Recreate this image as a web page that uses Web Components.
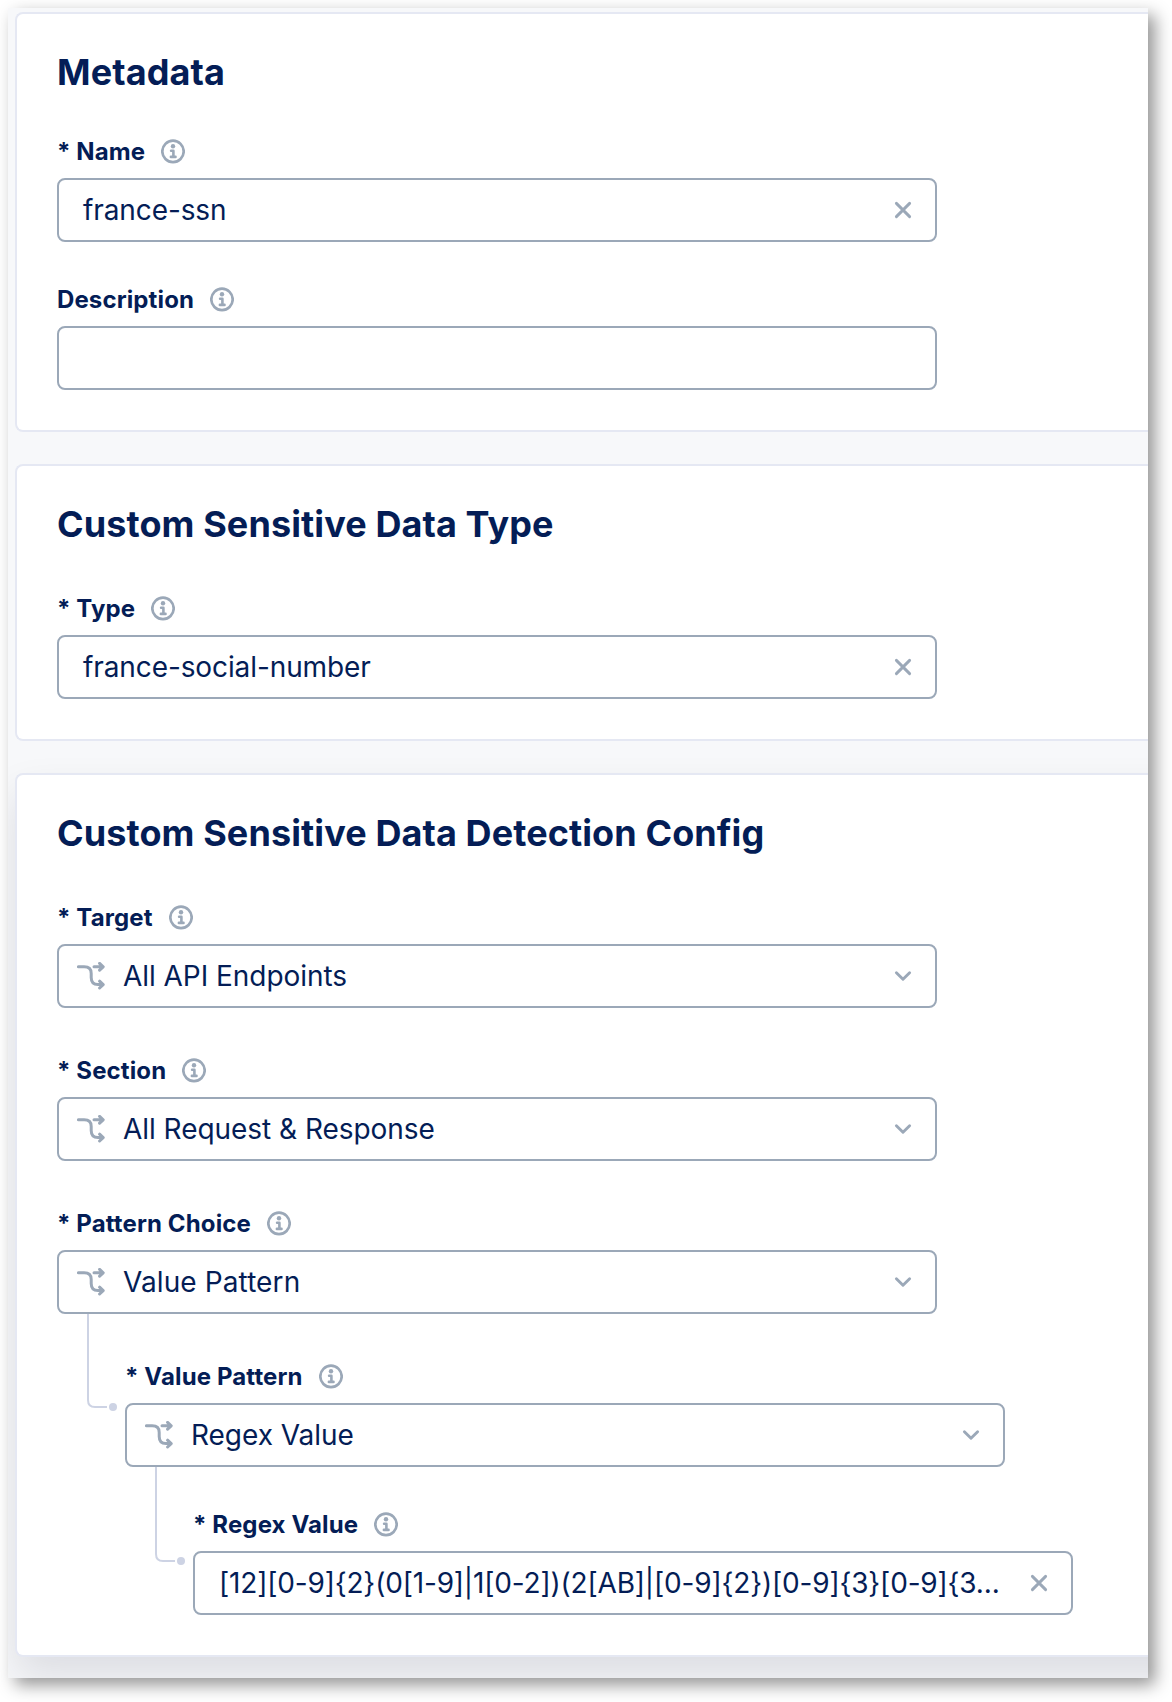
<!DOCTYPE html>
<html lang="en">
<head>
<meta charset="utf-8">
<title>Custom Sensitive Data</title>
<style>
  body { margin: 0; background: #fff; font-family: Inter, "Liberation Sans", sans-serif; color: #041d56; }
  .pattern { letter-spacing: -.17px; }
  .spaced { letter-spacing: .1px; }
</style>
</head>
<body>
<form-frame>
  <form-card heading="Metadata">
    <form-field label="Name" required><text-box clearable>france-ssn</text-box></form-field>
    <form-field label="Description"><text-box></text-box></form-field>
  </form-card>
  <form-card heading="Custom Sensitive Data Type">
    <form-field label="Type" required roomy><text-box clearable>france-social-number</text-box></form-field>
  </form-card>
  <form-card heading="Custom Sensitive Data Detection Config" raised>
    <form-field label="Target" required roomy><select-box>All API Endpoints</select-box></form-field>
    <form-field label="Section" required roomy><select-box>All Request &amp; Response</select-box></form-field>
    <form-field label="Pattern Choice" required roomy><select-box class="spaced">Value Pattern</select-box></form-field>
    <nested-group drop="93">
      <form-field label="Value Pattern" required roomy><select-box>Regex Value</select-box></form-field>
      <nested-group drop="94">
        <form-field label="Regex Value" required><text-box class="pattern" clearable>[12][0-9]{2}(0[1-9]|1[0-2])(2[AB]|[0-9]{2})[0-9]{3}[0-9]{3...</text-box></form-field>
      </nested-group>
    </nested-group>
  </form-card>
</form-frame>
<script>
const define = (name, render) => customElements.define(name, class extends HTMLElement {
  constructor() {
    super();
    this.attachShadow({ mode: "open" });
  }
  connectedCallback() {
    this.shadowRoot.innerHTML = render(this);
  }
});

define("form-frame", () => `
  <style>
    :host { display: block; padding: 8px 24px 24px 8px; }
    .window { box-sizing: border-box; width: 1140px; height: 1670px; background: #f7f8fa; box-shadow: 7px 7px 16px rgba(0,0,0,.42); }
    .page { box-sizing: border-box; height: 100%; overflow: hidden; display: flex; flex-direction: column; gap: 32px; padding: 4px 0 0 7px; }
  </style>
  <div class="window"><div class="page"><slot></slot></div></div>`);

define("form-card", el => `
  <style>
    :host { display: block; box-sizing: border-box; border: 2px solid #e5e8f3; border-right: 0; border-radius: 8px 0 0 8px; background: #fff; padding: 36px 0 40px 40px; }
    :host([raised]) { box-shadow: 0 20px 40px rgba(10,10,40,.11); margin-right: -60px; }
    h2 { margin: 0; font-size: 36px; line-height: 44px; font-weight: 700; letter-spacing: .1px; white-space: nowrap; }
  </style>
  <h2>${el.getAttribute("heading")}</h2><slot></slot>`);

define("info-icon", () => `
  <style>:host { display: block; width: 24px; height: 25px; } svg { display: block; }</style>
  <svg width="24" height="25" viewBox="0 0 24 25" fill="none" stroke="#9ba8b8">
    <circle cx="12" cy="12.4" r="10.7" stroke-width="2.7"/>
    <circle cx="12" cy="7.2" r="2.2" fill="#9ba8b8" stroke="none"/>
    <path d="M10.1 11.7h2.3v6.2M9.9 17.9h4.6" stroke-width="2.6" stroke-linecap="round" stroke-linejoin="round"/>
  </svg>`);

define("form-field", el => `
  <style>
    :host { display: block; margin-top: 44px; }
    :host([roomy]) { margin-top: 49px; }
    .label { display: flex; align-items: flex-start; height: 28px; margin-bottom: 12px; font-size: 24px; line-height: 28px; font-weight: 700; letter-spacing: .12px; white-space: nowrap; }
    info-icon { margin: 1px 0 0 16px; }
  </style>
  <div class="label"><span>${el.hasAttribute("required") ? "* " : ""}${el.getAttribute("label")}</span><info-icon></info-icon></div>
  <slot></slot>`);

const boxStyle = `
  :host { display: flex; box-sizing: border-box; align-items: center; width: 880px; height: 64px; border: 2px solid #9ba8b8; border-radius: 8px; background: #fff; font-size: 28px; line-height: 40px; }
  .value { flex: 1; min-width: 0; white-space: nowrap; font-weight: 400; }
  svg { display: block; flex: none; }
  .end { margin-right: 20px; }`;

define("text-box", el => `
  <style>:host { letter-spacing: -.1px; } ${boxStyle} .value { margin-left: 24px; }</style>
  <span class="value"><slot></slot></span>
  ${el.hasAttribute("clearable") ? `<svg class="end" width="24" height="24" viewBox="0 0 24 24" stroke="#9ba8b8" stroke-width="2.9" stroke-linecap="round"><path d="M5.4 5.4l13.2 13.2M18.6 5.4L5.4 18.6"/></svg>` : ""}`);

define("select-box", () => `
  <style>:host { letter-spacing: -.04px; } ${boxStyle} .branch { margin: 0 18px 0 18px; }</style>
  <svg class="branch" width="28" height="28" viewBox="0 0 28 28" fill="none" stroke="#9ba8b8" stroke-width="3" stroke-linecap="round" stroke-linejoin="round">
    <path d="M1.4 4.8H7.2C12.4 4.8 14.2 7.4 14.2 11.4V15.6C14.2 20.2 16.6 22.6 21 22.6H25.6"/>
    <path d="M17 4.8H26M22.6 1.4L26.2 4.8L22.6 8.2M22.6 19.2L26.2 22.6L22.6 26"/>
  </svg>
  <span class="value"><slot></slot></span>
  <svg class="end" width="24" height="24" viewBox="0 0 24 24" fill="none" stroke="#9ba8b8" stroke-width="2.9" stroke-linecap="round" stroke-linejoin="round"><path d="M5.4 8.8L12 15.3L18.6 8.8"/></svg>`);

define("nested-group", el => {
  const y = +el.getAttribute("drop");
  return `
  <style>
    :host { display: flex; align-items: flex-start; }
    svg { display: block; flex: none; }
    .content { display: flow-root; flex: none; }
  </style>
  <svg width="68" height="${y + 6}" fill="none" stroke="#cdd3e4" stroke-width="2">
    <path d="M31 0V${y - 7}Q31 ${y} 38 ${y}H50"/>
    <circle cx="56" cy="${y}" r="4" fill="#cdd3e4" stroke="none"/>
  </svg>
  <div class="content"><slot></slot></div>`;
});
</script>
</body>
</html>
